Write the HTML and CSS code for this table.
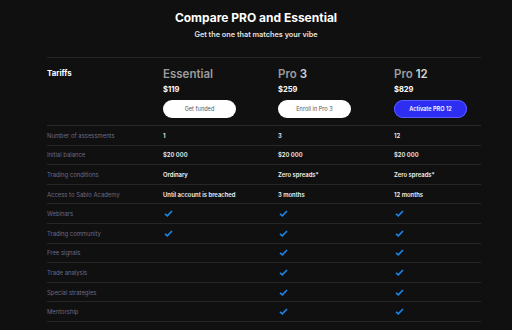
FILE: index.html
```html
<!DOCTYPE html>
<html lang="en">
<head>
    <meta charset="UTF-8">
    <meta name="viewport" content="width=device-width, initial-scale=1.0">
    <title>Compare PRO and Essential</title>
    <link rel="stylesheet" href="styles.css">
</head>
<body>
    <header class="intro">
        <h1>Compare PRO and Essential</h1>
        <p>Get the one that matches your vibe</p>
    </header>

    <div class="compare">
        <div class="plans">
            <div class="plans-label">Tariffs</div>
            <div class="plan">
                <div class="plan-name">Essential</div>
                <div class="plan-price">$119</div>
                <button class="plan-btn">Get funded</button>
            </div>
            <div class="plan">
                <div class="plan-name">Pro <span>3</span></div>
                <div class="plan-price">$259</div>
                <button class="plan-btn">Enroll in Pro 3</button>
            </div>
            <div class="plan">
                <div class="plan-name">Pro <span>12</span></div>
                <div class="plan-price">$829</div>
                <button class="plan-btn primary">Activate PRO 12</button>
            </div>
        </div>

        <div id="rows"></div>
    </div>

    <script>
        // Feature rows: true = check mark, false = empty cell
        const features = [
            ['Number of assessments', '1', '3', '12'],
            ['Initial balance', '$20 000', '$20 000', '$20 000'],
            ['Trading conditions', 'Ordinary', 'Zero spreads*', 'Zero spreads*'],
            ['Access to Sabio Academy', 'Until account is breached', '3 months', '12 months'],
            ['Webinars', true, true, true],
            ['Trading community', true, true, true],
            ['Free signals', false, true, true],
            ['Trade analysis', false, true, true],
            ['Special strategies', false, true, true],
            ['Mentorship', false, true, true]
        ];

        const check = '<svg class="check" width="9" height="7" viewBox="0 0 9 7"><path d="M1 3.8 L3.3 5.8 L8 1" fill="none" stroke="#1c86e8" stroke-width="1.6"/></svg>';

        const rows = document.getElementById('rows');
        features.forEach(([label, ...cells]) => {
            const row = document.createElement('div');
            row.className = 'row';
            let html = `<div class="row-label">${label}</div>`;
            cells.forEach(cell => {
                let content = '';
                if (cell === true) content = check;
                else if (cell !== false) content = cell;
                html += `<div class="row-cell">${content}</div>`;
            });
            row.innerHTML = html;
            rows.appendChild(row);
        });
    </script>
</body>
</html>
```

FILE: styles.css
```css
body {
    font-family: Inter, "Liberation Sans", sans-serif;
    margin: 0;
    padding: 0;
    background-color: #101010;
    color: white;
}

.intro {
    text-align: center;
    padding-top: 10px;
    height: 47px;
}

.intro h1 {
    margin: 0;
    font-size: 12px;
    font-weight: 700;
    line-height: 16px;
}

.intro p {
    margin: 4px 0 0;
    font-size: 7.3px;
    font-weight: 600;
    color: #e2e2e2;
}

.compare {
    margin: 0 31px 0 47px;
    border-top: 1px solid #262626;
}

.plans,
.row {
    display: grid;
    grid-template-columns: 116px 115px 116px 1fr;
}

.plans {
    height: 67px;
    border-bottom: 1px solid #2a2a2a;
}

.plans-label {
    font-size: 7.8px;
    font-weight: 700;
    padding-top: 10px;
}

.plan {
    padding-top: 9px;
}

.plan-name {
    font-size: 11.5px;
    font-weight: 600;
    color: #9c9c9c;
    line-height: 15px;
}

.plan-name span {
    color: #d4d4d4;
}

.plan-price {
    font-size: 7.5px;
    font-weight: 700;
    margin-top: 1.5px;
    line-height: 11px;
}

.plan-btn {
    margin-top: 4.5px;
    width: 73px;
    height: 18px;
    border: none;
    border-radius: 9px;
    background-color: white;
    color: #555;
    font-family: inherit;
    font-size: 5.6px;
    padding: 0;
}

.plan-btn.primary {
    background-color: #2e2ef2;
    color: white;
    font-weight: 600;
    box-shadow: inset 0 0 0 1px #5a5aff;
}

.row {
    height: 19.6px;
    align-items: center;
    border-bottom: 1px solid #262626;
    box-sizing: border-box;
    font-size: 5.9px;
}

.row-label {
    color: #6c6a86;
}

.row-cell {
    font-weight: 600;
    color: #f2f2f2;
    display: flex;
    align-items: center;
}

.check {
    margin-left: 1px;
}
```
